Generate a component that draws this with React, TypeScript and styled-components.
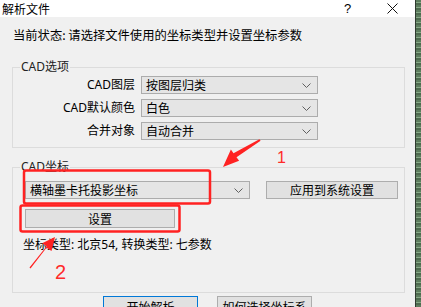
import React from "react";
import styled, { createGlobalStyle } from "styled-components";

const Global = createGlobalStyle`
  html, body { margin: 0; padding: 0; background: #f0f0f0; }
  body { font-family: "Noto Sans", "Noto Sans CJK SC", sans-serif; font-size: 12px; color: #000; }
`;

const Screen = styled.div`
  width: 421px;
  height: 307px;
  display: flex;
  overflow: hidden;
`;

const Dialog = styled.div`
  position: relative;
  width: 415px;
  flex: none;
  display: flex;
  flex-direction: column;
  background: #f0f0f0;
`;

const Desktop = styled.div`
  flex: 1;
  background:
    linear-gradient(to right, #2e3a2f 0 1px, transparent 1px),
    repeating-linear-gradient(180deg, #5d7d5e 0 2px, #86a886 2px 3px, #4e6a4f 3px 5px);
`;

const TitleBar = styled.div`
  height: 17px;
  flex: none;
  background: #fff;
  display: flex;
  align-items: center;
  padding-left: 2px;
`;

const Title = styled.span`
  font-family: "Noto Sans CJK SC", sans-serif;
  font-size: 12px;
  line-height: 14px;
  flex: 1;
`;

const TitleButton = styled.span`
  width: 45px;
  height: 17px;
  display: flex;
  align-items: center;
  justify-content: center;
  font-family: "Liberation Sans", sans-serif;
  font-size: 13px;
`;

const Body = styled.div`
  display: flex;
  flex-direction: column;
  padding: 10px 10px 0 12px;
`;

const Status = styled.div`
  font-family: "Noto Sans CJK SC", sans-serif;
  font-size: 12.3px;
  line-height: 16px;
  padding-left: 1px;
`;

const Group = styled.div<{ $mt: number; $pt: number; $pb: number }>`
  position: relative;
  margin-top: ${(p) => p.$mt}px;
  border: 1px solid #dcdcdc;
  padding: ${(p) => p.$pt}px 0 ${(p) => p.$pb}px 0;
  display: flex;
  flex-direction: column;
`;

const Legend = styled.span`
  position: absolute;
  top: -8px;
  left: 7px;
  padding: 0 1px;
  background: #f0f0f0;
  font-family: "Noto Sans", "Noto Sans CJK SC", sans-serif;
  font-size: 12px;
  line-height: 14px;
  color: #222;
`;

const FormGrid = styled.div`
  display: grid;
  grid-template-columns: 122px 177px;
  column-gap: 6px;
  row-gap: 5px;
`;

const FieldLabel = styled.span`
  text-align: right;
  align-self: center;
  font-family: "Noto Sans", "Noto Sans CJK SC", sans-serif;
  font-size: 12px;
  line-height: 16px;
`;

const Combo = styled.div<{ $w: number }>`
  box-sizing: border-box;
  width: ${(p) => p.$w}px;
  height: 18px;
  background: #e5e5e5;
  border: 1px solid #acacac;
  display: flex;
  align-items: center;
  padding: 0 6px 0 4px;
  font-family: "Noto Sans CJK SC", sans-serif;
  font-size: 12px;
  line-height: 16px;
  white-space: nowrap;
`;

const ComboText = styled.span`
  flex: 1;
`;

const Chevron = () => (
  <svg width="9" height="5" viewBox="0 0 9 5">
    <path d="M0.5 0.5 L4.5 4.5 L8.5 0.5" fill="none" stroke="#606060" strokeWidth="1" />
  </svg>
);

const Button = styled.div<{ $w: number; $h?: number; $default?: boolean }>`
  box-sizing: border-box;
  width: ${(p) => p.$w}px;
  height: ${(p) => p.$h ?? 18}px;
  background: #e1e1e1;
  border: 1px solid ${(p) => (p.$default ? "#0078d7" : "#adadad")};
  display: flex;
  align-items: center;
  justify-content: center;
  font-family: "Noto Sans CJK SC", sans-serif;
  font-size: 12px;
  line-height: 16px;
  white-space: nowrap;
`;

const CoordRow = styled.div`
  display: flex;
  align-items: center;
  padding-left: 12px;
  gap: 16px;
`;

const SetupRow = styled.div`
  display: flex;
  padding-left: 12px;
  margin-top: 10px;
`;

const Info = styled.div`
  margin-top: 9px;
  padding-left: 10px;
  font-family: "Noto Sans", "Noto Sans CJK SC", sans-serif;
  font-size: 12px;
  line-height: 16px;
`;

const Footer = styled.div`
  display: flex;
  justify-content: center;
  gap: 19px;
  margin-top: 3px;
  margin-left: -12px;
  margin-right: -10px;
`;

const Overlay = styled.svg`
  position: absolute;
  left: 0;
  top: 0;
  pointer-events: none;
`;

const Mark = styled.span<{ $x: number; $y: number; $size: number }>`
  position: absolute;
  left: ${(p) => p.$x}px;
  top: ${(p) => p.$y}px;
  font-family: "Liberation Sans", sans-serif;
  font-size: ${(p) => p.$size}px;
  line-height: 1;
  color: #ff2a2a;
`;

export default function App() {
  return (
    <>
      <Global />
      <Screen>
        <Dialog>
          <TitleBar>
            <Title>解析文件</Title>
            <TitleButton>?</TitleButton>
            <TitleButton>
              <svg width="11" height="11" viewBox="0 0 11 11">
                <path d="M0.5 0.5 L10.5 10.5 M10.5 0.5 L0.5 10.5" stroke="#111" strokeWidth="1" />
              </svg>
            </TitleButton>
          </TitleBar>
          <Body>
            <Status>当前状态: 请选择文件使用的坐标类型并设置坐标参数</Status>
            <Group $mt={24} $pt={8} $pb={7}>
              <Legend>CAD选项</Legend>
              <FormGrid>
                <FieldLabel>CAD图层</FieldLabel>
                <Combo $w={177}>
                  <ComboText>按图层归类</ComboText>
                  <Chevron />
                </Combo>
                <FieldLabel>CAD默认颜色</FieldLabel>
                <Combo $w={177}>
                  <ComboText>白色</ComboText>
                  <Chevron />
                </Combo>
                <FieldLabel>合并对象</FieldLabel>
                <Combo $w={177}>
                  <ComboText>自动合并</ComboText>
                  <Chevron />
                </Combo>
              </FormGrid>
            </Group>
            <Group $mt={19} $pt={13} $pb={39}>
              <Legend>CAD坐标</Legend>
              <CoordRow>
                <Combo $w={225}>
                  <ComboText>横轴墨卡托投影坐标</ComboText>
                  <Chevron />
                </Combo>
                <Button $w={132}>应用到系统设置</Button>
              </CoordRow>
              <SetupRow>
                <Button $w={150} $h={19}>设置</Button>
              </SetupRow>
              <Info>坐标类型: 北京54, 转换类型: 七参数</Info>
            </Group>
            <Footer>
              <Button $w={95} $h={22} $default>开始解析</Button>
              <Button $w={95} $h={22}>如何选择坐标系</Button>
            </Footer>
          </Body>

          <Overlay width="415" height="307" viewBox="0 0 415 307">
            <rect x="24" y="170.5" width="186" height="33" rx="2" fill="none" stroke="#ff2222" strokeWidth="2.5" />
            <rect x="20.5" y="205.5" width="159" height="26" rx="2" fill="none" stroke="#ff2222" strokeWidth="2.5" />
            <polygon
              points="260.6,140.8 236.5,157.2 239.1,160.8 223,167 230.9,149.6 233.5,153.2 259.4,139.2"
              fill="#ff2222"
            />
            <polygon
              points="30.5,268.5 46.5,247.8 51.5,250.9 55,237 42.1,243.3 46.6,246.2 29.5,267.5"
              fill="#ff2222"
            />
          </Overlay>
          <Mark $x={277} $y={150} $size={16}>1</Mark>
          <Mark $x={55} $y={262} $size={20}>2</Mark>
        </Dialog>
        <Desktop />
      </Screen>
    </>
  );
}
